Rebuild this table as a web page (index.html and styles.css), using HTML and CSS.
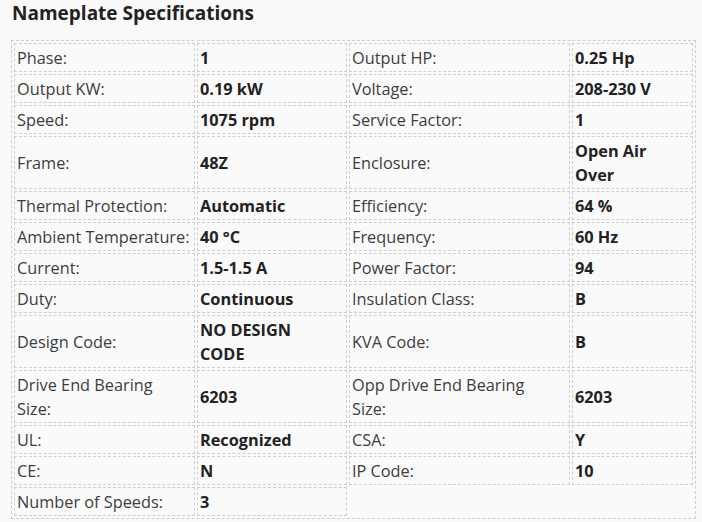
FILE: index.html
```html
<!DOCTYPE html>
<html>
<head>
<meta charset="utf-8">
<link rel="stylesheet" href="styles.css">
</head>
<body>
<div class="page">
  <h2 class="title">Nameplate Specifications</h2>
  <table class="specs">
    <colgroup>
      <col class="c1"><col class="c2"><col class="c3"><col class="c4">
    </colgroup>
    <tbody>
      <tr><td class="lbl">Phase:</td><td class="val">1</td><td class="lbl">Output HP:</td><td class="val">0.25 Hp</td></tr>
      <tr><td class="lbl">Output KW:</td><td class="val">0.19 kW</td><td class="lbl">Voltage:</td><td class="val">208-230 V</td></tr>
      <tr><td class="lbl">Speed:</td><td class="val">1075 rpm</td><td class="lbl">Service Factor:</td><td class="val">1</td></tr>
      <tr><td class="lbl">Frame:</td><td class="val">48Z</td><td class="lbl">Enclosure:</td><td class="val">Open Air<br>Over</td></tr>
      <tr><td class="lbl">Thermal Protection:</td><td class="val">Automatic</td><td class="lbl">Efficiency:</td><td class="val">64 %</td></tr>
      <tr><td class="lbl">Ambient Temperature:</td><td class="val">40 °C</td><td class="lbl">Frequency:</td><td class="val">60 Hz</td></tr>
      <tr><td class="lbl">Current:</td><td class="val">1.5-1.5 A</td><td class="lbl">Power Factor:</td><td class="val">94</td></tr>
      <tr><td class="lbl">Duty:</td><td class="val">Continuous</td><td class="lbl">Insulation Class:</td><td class="val">B</td></tr>
      <tr><td class="lbl">Design Code:</td><td class="val">NO DESIGN<br>CODE</td><td class="lbl">KVA Code:</td><td class="val">B</td></tr>
      <tr><td class="lbl">Drive End Bearing<br>Size:</td><td class="val">6203</td><td class="lbl">Opp Drive End Bearing<br>Size:</td><td class="val">6203</td></tr>
      <tr><td class="lbl">UL:</td><td class="val">Recognized</td><td class="lbl">CSA:</td><td class="val">Y</td></tr>
      <tr><td class="lbl">CE:</td><td class="val">N</td><td class="lbl">IP Code:</td><td class="val">10</td></tr>
      <tr><td class="lbl">Number of Speeds:</td><td class="val">3</td><td class="empty" colspan="2"></td></tr>
    </tbody>
  </table>
</div>
</body>
</html>
```

FILE: styles.css
```css
html, body {
  margin: 0;
  padding: 0;
  background: #fafafa;
}
body {
  font-family: "Open Sans", "Noto Sans", sans-serif;
  color: #333;
}
.page {
  padding: 0 0 0 11px;
}
.title {
  margin: 0;
  padding: 1px 0 0 1px;
  height: 40px;
  box-sizing: border-box;
  font-size: 19px;
  line-height: 24px;
  font-weight: 700;
  color: #222;
}
.specs {
  table-layout: fixed;
  width: 685px;
  border: 1px dashed #cfcfcf;
  border-spacing: 2px;
  border-collapse: separate;
  font-size: 16.3px;
  line-height: 24px;
}
.c1 { width: 181px; }
.c2 { width: 150px; }
.c3 { width: 221px; }
.c4 { width: 121px; }
.specs td {
  box-sizing: border-box;
  border: 1px dashed #cfcfcf;
  padding: 2px 2px 1px 2px;
  vertical-align: middle;
  white-space: nowrap;
  overflow: hidden;
}
.lbl {
  color: #3d3d3d;
  font-weight: 400;
}
.val {
  color: #222;
  font-weight: 700;
}
.specs td.empty {
  border: none;
}
```
